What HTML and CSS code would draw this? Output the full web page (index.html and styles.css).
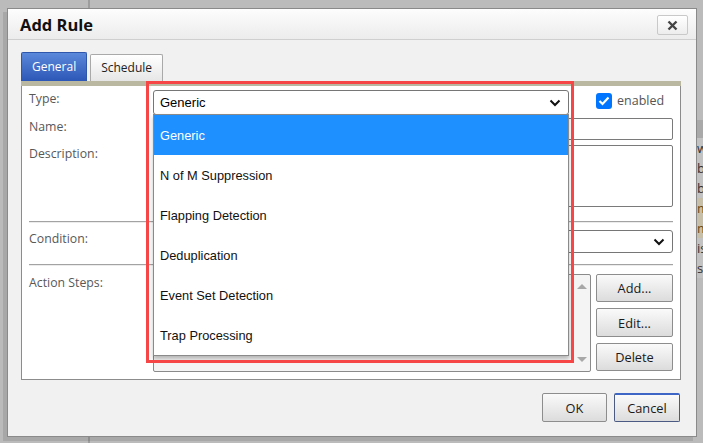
FILE: index.html
```html
<!DOCTYPE html>
<html lang="en">
<head>
<meta charset="UTF-8" />
<title>Add Rule</title>
<link rel="stylesheet" href="styles.css">
</head>
<body>

<!-- page behind the modal -->
<div class="page">
  <div class="side"></div>
  <div class="main">
    <div class="bg-col">
      <div class="bg-head"></div>
      <div class="bg-row">w</div>
      <div class="bg-row">b</div>
      <div class="bg-row">b</div>
      <div class="bg-row tan">m</div>
      <div class="bg-row tan">m</div>
      <div class="bg-row">is</div>
      <div class="bg-row">s</div>
    </div>
  </div>
</div>

<div class="dialog">
  <div class="dlg-head">
    <span class="dlg-title">Add Rule</span>
    <button class="btn-x" title="Close">
      <svg width="11" height="11" viewBox="0 0 11 11"><path d="M1.5 1.5 L9.5 9.5 M9.5 1.5 L1.5 9.5" stroke="#444" stroke-width="2.4" fill="none"/></svg>
    </button>
  </div>

  <div class="dlg-body">
    <div class="tabs">
      <div class="tab active">General</div>
      <div class="tab">Schedule</div>
    </div>
    <div class="tab-strip"></div>

    <div class="panel">
      <div class="row row-type">
        <label>Type:</label>
        <div class="select select-type">
          <span>Generic</span>
          <svg class="chev" width="12" height="8" viewBox="0 0 12 8"><path d="M1.5 1.5 L6 6 L10.5 1.5" fill="none" stroke="#111" stroke-width="2"/></svg>
          <ul class="dropdown">
            <li class="sel">Generic</li>
            <li>N of M Suppression</li>
            <li>Flapping Detection</li>
            <li>Deduplication</li>
            <li>Event Set Detection</li>
            <li>Trap Processing</li>
          </ul>
        </div>
        <div class="enabled">
          <span class="check"><svg width="12" height="10" viewBox="0 0 12 10"><path d="M1.5 5 L4.5 8 L10.5 1.5" fill="none" stroke="#fff" stroke-width="2.2"/></svg></span>
          enabled
        </div>
      </div>

      <div class="row row-name">
        <label>Name:</label>
        <div class="input"></div>
      </div>

      <div class="row row-desc">
        <label>Description:</label>
        <div class="input textarea"></div>
      </div>

      <div class="sep"></div>

      <div class="row row-cond">
        <label>Condition:</label>
        <div class="select select-cond">
          <span></span>
          <svg class="chev" width="12" height="8" viewBox="0 0 12 8"><path d="M1.5 1.5 L6 6 L10.5 1.5" fill="none" stroke="#111" stroke-width="2"/></svg>
        </div>
      </div>

      <div class="sep sep2"></div>

      <div class="row row-actions">
        <label>Action Steps:</label>
        <div class="listbox">
          <div class="lb-items"></div>
          <div class="lb-scroll">
            <span class="arr up"></span>
            <span class="arr down"></span>
          </div>
        </div>
        <div class="action-btns">
          <button class="btn">Add...</button>
          <button class="btn">Edit...</button>
          <button class="btn">Delete</button>
        </div>
      </div>
    </div>

    <div class="footer">
      <button class="btn btn-foot">OK</button>
      <button class="btn btn-foot btn-focus">Cancel</button>
    </div>
  </div>

  <!-- red highlight round the open dropdown -->
  <div class="highlight"></div>
</div>

</body>
</html>
```

FILE: styles.css
```css
body {
  margin: 0;
  width: 703px;
  height: 443px;
  overflow: hidden;
  background: #bbbbbb;
  font-family: "Open Sans", "DejaVu Sans", sans-serif;
  position: relative;
}

/* background page */
.page {
  display: flex;
  height: 443px;
}
.side {
  width: 88px;
  flex: 0 0 88px;
  border-right: 2px solid #9d9d9d;
}
.main {
  flex: 1;
  display: flex;
  justify-content: flex-end;
}
.bg-col {
  width: 40px;
  margin-right: -33px;
  padding-top: 120px;
  font-size: 13px;
  color: #333;
}
.bg-head {
  height: 18px;
  background: #a9a9a9;
}
.bg-row {
  height: 20px;
  line-height: 20px;
  padding-left: 1px;
  background: #c2c2c2;
}
.bg-row.tan {
  background: #c7bfa8;
  color: #6a4a12;
}

/* dialog */
.dialog {
  position: absolute;
  left: 7px;
  top: 8px;
  width: 690px;
  height: 429px;
  box-sizing: border-box;
  border: 1px solid #8a8a8a;
  background: #f1f1f1;
  box-shadow: -4px 4px 0 rgba(0,0,0,0.1);
}
.dlg-head {
  height: 30px;
  border-bottom: 1px solid #cfcfcf;
  background: linear-gradient(#fdfdfd, #ececec);
  display: flex;
  align-items: center;
  justify-content: space-between;
  padding: 0 8px 0 12px;
}
.dlg-title {
  font-size: 16.5px;
  font-weight: bold;
  color: #111;
}
.btn-x {
  width: 31px;
  height: 20px;
  margin-top: 2px;
  border: 1px solid #c9c9c9;
  border-radius: 2px;
  background: linear-gradient(#ffffff, #ededed);
  padding: 0;
  display: flex;
  align-items: center;
  justify-content: center;
}

.dlg-body {
  padding: 13px 15px 0 13px;
}

/* tabs */
.tabs {
  display: flex;
  gap: 3px;
  height: 28px;
  align-items: flex-end;
}
.tab {
  height: 26px;
  line-height: 26px;
  padding: 0 10px;
  font-size: 12px;
  color: #222;
  border: 1px solid #a9a9a9;
  border-bottom: none;
  background: linear-gradient(#ffffff, #e6e6e6);
  border-radius: 2px 2px 0 0;
}
.tab.active {
  height: 28px;
  line-height: 28px;
  color: #fff;
  border-color: #2e57ac;
  background: linear-gradient(#5a88da, #2d57b6);
}
.tab-strip {
  height: 5px;
  background: #bab8a1;
}

/* panel */
.panel {
  background: #fff;
  border: 1px solid #8c8c8c;
  border-top: none;
  padding: 4px 7px 7px 7px;
}
.row {
  display: flex;
  align-items: flex-start;
}
.row label {
  flex: 0 0 124px;
  font-size: 12.3px;
  line-height: 16px;
  padding-top: 1px;
  color: #585858;
}
.row-name { margin-top: 3px; }
.row-desc { margin-top: 5px; }
.row-cond { margin-top: 7px; }
.row-actions { margin-top: 8px; }

.sep {
  margin-top: 14px;
  height: 0;
  border-top: 1px solid #a3a3a3;
  border-bottom: 1px solid #ececec;
}
.sep2 { margin-top: 11px; }

.input {
  flex: 1;
  height: 22px;
  box-sizing: border-box;
  border: 1px solid #7a7a7a;
  border-radius: 2px;
  background: #fff;
}
.textarea { height: 62px; }

.select {
  position: relative;
  box-sizing: border-box;
  border: 1px solid #767676;
  border-radius: 3px;
  background: #fff;
  display: flex;
  align-items: center;
  justify-content: space-between;
  padding: 0 7px 0 6px;
  font-family: "Liberation Sans", Arial, sans-serif;
  font-size: 13px;
  color: #000;
}
.select-type {
  width: 416px;
  height: 25px;
}
.select-cond {
  flex: 1;
  height: 23px;
}

.dropdown {
  position: absolute;
  left: -1px;
  right: -1px;
  top: 23px;
  margin: 0;
  padding: 0;
  list-style: none;
  background: #fff;
  border: 1px solid #8a8a8a;
  box-shadow: 0 3px 4px rgba(0,0,0,0.25);
  font-size: 12.8px;
  z-index: 5;
}
.dropdown li {
  height: 40px;
  line-height: 42px;
  padding-left: 6px;
  color: #111;
}
.dropdown li.sel {
  background: #1e90ff;
  color: #fff;
}

.enabled {
  margin-left: 27px;
  display: flex;
  align-items: center;
  gap: 5px;
  font-size: 12.5px;
  color: #555;
  padding-top: 2px;
}
.check {
  width: 16px;
  height: 16px;
  border-radius: 3px;
  background: #0075ff;
  display: flex;
  align-items: center;
  justify-content: center;
}

/* action steps */
.listbox {
  width: 438px;
  height: 98px;
  box-sizing: border-box;
  border: 1px solid #8a8a8a;
  border-radius: 2px;
  background: #f4f4f4;
  display: flex;
}
.lb-items { flex: 1; }
.lb-scroll {
  width: 17px;
  display: flex;
  flex-direction: column;
  justify-content: space-between;
  align-items: center;
  padding: 9px 0 9px;
}
.arr {
  width: 0;
  height: 0;
  border-left: 5px solid transparent;
  border-right: 5px solid transparent;
}
.arr.up { border-bottom: 5px solid #a8a8a8; }
.arr.down { border-top: 5px solid #a8a8a8; }

.action-btns {
  margin-left: 5px;
  flex: 1;
  display: flex;
  flex-direction: column;
  gap: 6px;
}
.btn {
  height: 28px;
  box-sizing: border-box;
  border: 1px solid #8d8d8d;
  border-radius: 2px;
  background: linear-gradient(#fafafa, #dcdcdc);
  font-family: "Open Sans", "DejaVu Sans", sans-serif;
  font-size: 12.8px;
  color: #1a1a1a;
  padding: 0;
}
.action-btns .btn:nth-child(2) { height: 29px; }

.footer {
  margin-top: 13px;
  display: flex;
  justify-content: flex-end;
  gap: 7px;
  padding-right: 1px;
}
.btn-foot {
  width: 65px;
  height: 29px;
}
.btn-focus {
  width: 66px;
  border-color: #4b5a82;
  border-top: 2px solid #3d66c6;
}

/* red highlight */
.highlight {
  position: absolute;
  left: 138px;
  top: 72px;
  width: 428px;
  height: 282px;
  box-sizing: border-box;
  border: 3px solid #f64646;
  z-index: 10;
}
```
